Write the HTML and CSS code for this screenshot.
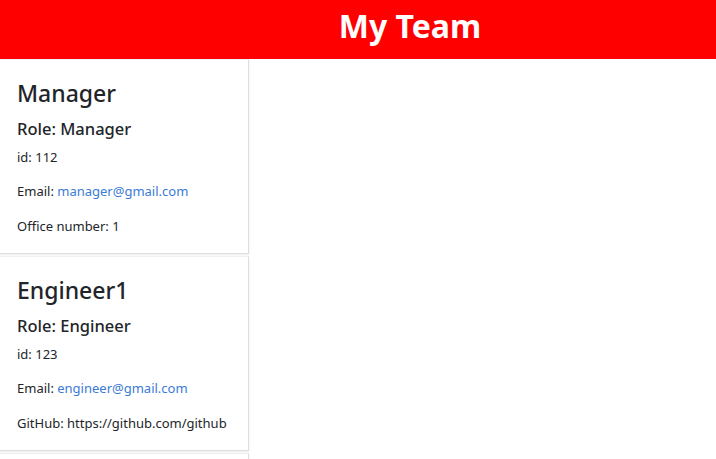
FILE: index.html
```html
<!DOCTYPE html>
<html lang="en">
<head>
<meta charset="utf-8">
<title>My Team</title>
<link rel="stylesheet" href="styles.css">
</head>
<body>
<header class="banner"><h1 class="banner-title">My Team</h1></header>
<main class="team">
  <section class="card">
    <h2 class="card-title">Manager</h2>
    <h3 class="card-role">Role: Manager</h3>
    <p class="card-line">id: 112</p>
    <p class="card-line">Email: <a class="card-link" href="#">manager@gmail.com</a></p>
    <p class="card-line">Office number: 1</p>
  </section>
  <section class="card">
    <h2 class="card-title">Engineer1</h2>
    <h3 class="card-role">Role: Engineer</h3>
    <p class="card-line">id: 123</p>
    <p class="card-line">Email: <a class="card-link" href="#">engineer@gmail.com</a></p>
    <p class="card-line">GitHub: https://github.com/github</p>
  </section>
  <section class="card card-empty"></section>
</main>
</body>
</html>
```
FILE: styles.css
```css
html, body {
  margin: 0;
  padding: 0;
  background: #ffffff;
  font-family: "Noto Sans", "Open Sans", sans-serif;
  color: #212529;
}
html {
  height: 459px;
  overflow: hidden;
}
body {
  height: 459px;
  overflow: hidden;
}
.banner {
  background: #ff0000;
  height: 59px;
  box-sizing: border-box;
  display: flex;
  align-items: flex-start;
  justify-content: center;
  padding: 6px 0 0 104px;
}
.banner-title {
  margin: 0;
  color: #ffffff;
  font-size: 32px;
  font-weight: 700;
  line-height: 40px;
}
.team {
  display: flex;
  flex-direction: column;
  gap: 2px;
  width: 249px;
}
.card {
  box-sizing: border-box;
  border: 1px solid rgba(0, 0, 0, 0.125);
  border-top-color: rgba(0, 0, 0, 0.06);
  border-left: none;
  box-shadow: 0 1px 2px rgba(0, 0, 0, 0.08);
  padding: 17px 17px 17.5px 17px;
  display: flex;
  flex-direction: column;
}
.card-empty {
  height: 8px;
  padding: 0;
}
.card-title {
  margin: 0;
  font-size: 23px;
  font-weight: 500;
  line-height: 32px;
}
.card-role {
  margin: 8.5px 0 0 0;
  font-size: 16.5px;
  font-weight: 500;
  line-height: 22px;
}
.card-line {
  margin: 7px 0 0 0;
  font-size: 13px;
  line-height: 20px;
}
.card-line + .card-line {
  margin-top: 14.5px;
}
.card-link {
  color: #3a7bd5;
  text-decoration: none;
}
```
